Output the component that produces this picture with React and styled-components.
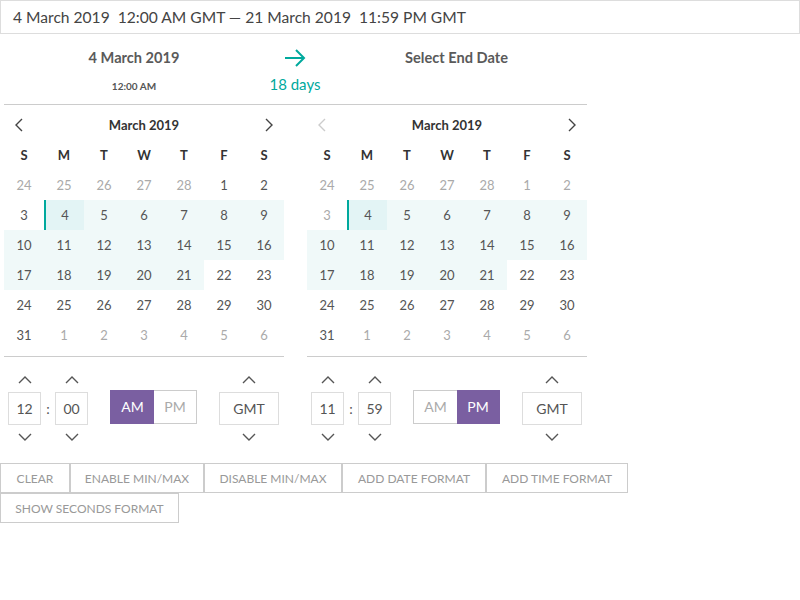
import React from "react";
import styled, { createGlobalStyle } from "styled-components";

const GlobalStyle = createGlobalStyle`
  html, body { margin: 0; padding: 0; background: #fff; }
  body { font-family: Lato, "Noto Sans", sans-serif; color: #555; }
  * { box-sizing: border-box; }
`;

const TEAL = "#00a99d";
const PURPLE = "#7a5fa1";

const Page = styled.div`
  width: 800px;
`;

const RangeInput = styled.div`
  width: 800px;
  height: 34px;
  border: 1px solid #ddd;
  padding: 0 12px;
  display: flex;
  align-items: center;
  font-size: 15.6px;
  color: #444;
  white-space: pre;
`;

const Picker = styled.div`
  width: 587px;
  padding-left: 4px;
`;

const Header = styled.div`
  display: grid;
  grid-template-columns: 260px 62px 261px;
  height: 71px;
  border-bottom: 1px solid #ccc;
  padding-top: 14px;
`;

const HeaderCol = styled.div`
  display: flex;
  flex-direction: column;
  align-items: center;
`;

const HeaderTitle = styled.div`
  font-size: 14.6px;
  line-height: 20px;
  font-weight: 700;
  color: #5a5a5a;
`;

const HeaderSub = styled.div`
  margin-top: 11px;
  font-size: 10px;
  line-height: 14px;
  font-weight: 700;
  color: #555;
`;

const Days = styled.div`
  margin-top: 6px;
  font-size: 15px;
  line-height: 20px;
  color: ${TEAL};
`;

const Calendars = styled.div`
  display: flex;
  gap: 23px;
`;

const Calendar = styled.div`
  width: 280px;
  border-bottom: 1px solid #ccc;
  padding-bottom: 6px;
`;

const Nav = styled.div`
  margin-top: 5px;
  height: 30px;
  display: flex;
  align-items: center;
  justify-content: space-between;
  padding: 0 11px;
`;

const NavTitle = styled.div`
  font-size: 13px;
  font-weight: 700;
  color: #333;
`;

const Grid = styled.div`
  display: grid;
  grid-template-columns: repeat(7, 40px);
  grid-auto-rows: 30px;
`;

const WeekDay = styled.div`
  display: flex;
  align-items: center;
  justify-content: center;
  font-size: 13px;
  font-weight: 700;
  color: #333;
`;

const Day = styled.div`
  display: flex;
  align-items: center;
  justify-content: center;
  font-size: 13px;
  color: ${(p) => (p.$muted ? "#aaa" : "#555")};
  background: ${(p) => (p.$start ? "#e3f4f5" : p.$inRange ? "#f0f9f9" : "transparent")};
  border-left: ${(p) => (p.$start ? `2px solid ${TEAL}` : "none")};
`;

const TimeRow = styled.div`
  display: flex;
  align-items: center;
  justify-content: space-between;
  padding: 0 5px 0 4px;
  margin-top: 11px;
`;

const Spinners = styled.div`
  display: flex;
  align-items: center;
`;

const Spinner = styled.div`
  display: flex;
  flex-direction: column;
  align-items: center;
`;

const ChevronSlot = styled.div`
  height: 24px;
  display: flex;
  align-items: center;
  justify-content: center;
`;

const TimeBox = styled.div`
  width: ${(p) => p.$w || 33}px;
  height: 33px;
  border: 1px solid #ddd;
  display: flex;
  align-items: center;
  justify-content: center;
  font-size: 14px;
  color: #555;
`;

const Colon = styled.div`
  width: 14px;
  text-align: center;
  font-size: 14px;
  color: #555;
`;

const Toggle = styled.div`
  display: flex;
  margin-bottom: 4px;
`;

const ToggleBtn = styled.div`
  width: ${(p) => p.$w}px;
  height: 34px;
  display: flex;
  align-items: center;
  justify-content: center;
  font-size: 14px;
  background: ${(p) => (p.$active ? PURPLE : "#fff")};
  color: ${(p) => (p.$active ? "#fff" : "#aaa")};
  border: 1px solid ${(p) => (p.$active ? PURPLE : "#ccc")};
  ${(p) => (p.$side === "left" ? "border-right: none;" : "border-left: none;")}
`;

const Buttons = styled.div`
  display: flex;
  flex-wrap: wrap;
  width: 640px;
  margin-top: 14px;
`;

const Btn = styled.button`
  height: 30px;
  border: 1px solid #ccc;
  background: #fff;
  color: #999;
  font-family: Lato, "Noto Sans", sans-serif;
  font-size: 12px;
  padding: 0;
  white-space: nowrap;
  text-transform: uppercase;
  width: ${(p) => p.$w}px;
`;

const Chevron = ({ dir, color = "#555", size = 14 }) => {
  const paths = {
    up: "M1 8 L7 2 L13 8",
    down: "M1 2 L7 8 L13 2",
  };
  if (dir === "left" || dir === "right") {
    const d = dir === "left" ? "M7 1 L1 7 L7 13" : "M1 1 L7 7 L1 13";
    return (
      <svg width="8" height="14" viewBox="0 0 8 14">
        <path d={d} fill="none" stroke={color} strokeWidth="1.4" />
      </svg>
    );
  }
  return (
    <svg width={size} height="10" viewBox="0 0 14 10">
      <path d={paths[dir]} fill="none" stroke={color} strokeWidth="1.4" />
    </svg>
  );
};

const Arrow = () => (
  <svg width="24" height="20" viewBox="0 0 24 20">
    <path d="M2 10 H21 M13 2 L21 10 L13 18" fill="none" stroke={TEAL} strokeWidth="2" />
  </svg>
);

const WEEK = ["S", "M", "T", "W", "T", "F", "S"];

function buildDays(isEnd) {
  const cells = [];
  [24, 25, 26, 27, 28].forEach((d) => cells.push({ d, muted: true }));
  for (let d = 1; d <= 31; d++) {
    cells.push({
      d,
      muted: isEnd && d < 4,
      inRange: d >= 4 && d <= 21,
      start: d === 4,
    });
  }
  [1, 2, 3, 4, 5, 6].forEach((d) => cells.push({ d, muted: true }));
  return cells;
}

const Cal = ({ isEnd }) => (
  <Calendar>
    <Nav>
      <Chevron dir="left" color={isEnd ? "#ccc" : "#444"} />
      <NavTitle>March 2019</NavTitle>
      <Chevron dir="right" color="#444" />
    </Nav>
    <Grid>
      {WEEK.map((w, i) => (
        <WeekDay key={i}>{w}</WeekDay>
      ))}
      {buildDays(isEnd).map((c, i) => (
        <Day key={i} $muted={c.muted} $inRange={c.inRange} $start={c.start}>
          {c.d}
        </Day>
      ))}
    </Grid>
  </Calendar>
);

const SpinBox = ({ value, w }) => (
  <Spinner>
    <ChevronSlot>
      <Chevron dir="up" />
    </ChevronSlot>
    <TimeBox $w={w}>{value}</TimeBox>
    <ChevronSlot>
      <Chevron dir="down" />
    </ChevronSlot>
  </Spinner>
);

const Time = ({ h, m, pm }) => (
  <TimeRow>
    <Spinners>
      <SpinBox value={h} />
      <Colon>:</Colon>
      <SpinBox value={m} />
    </Spinners>
    <Toggle>
      <ToggleBtn $w={44} $side="left" $active={!pm}>AM</ToggleBtn>
      <ToggleBtn $w={43} $side="right" $active={pm}>PM</ToggleBtn>
    </Toggle>
    <SpinBox value="GMT" w={60} />
  </TimeRow>
);

export default function App() {
  return (
    <Page>
      <GlobalStyle />
      <RangeInput>4 March 2019  12:00 AM GMT — 21 March 2019  11:59 PM GMT</RangeInput>
      <Picker>
        <Header>
          <HeaderCol>
            <HeaderTitle>4 March 2019</HeaderTitle>
            <HeaderSub>12:00 AM</HeaderSub>
          </HeaderCol>
          <HeaderCol>
            <Arrow />
            <Days>18 days</Days>
          </HeaderCol>
          <HeaderCol>
            <HeaderTitle>Select End Date</HeaderTitle>
          </HeaderCol>
        </Header>
        <Calendars>
          <div>
            <Cal />
            <Time h="12" m="00" />
          </div>
          <div>
            <Cal isEnd />
            <Time h="11" m="59" pm />
          </div>
        </Calendars>
      </Picker>
      <Buttons>
        <Btn $w={70}>Clear</Btn>
        <Btn $w={134}>Enable min/max</Btn>
        <Btn $w={138}>Disable min/max</Btn>
        <Btn $w={144}>Add date format</Btn>
        <Btn $w={142}>Add time format</Btn>
        <Btn $w={179}>Show seconds format</Btn>
      </Buttons>
    </Page>
  );
}
